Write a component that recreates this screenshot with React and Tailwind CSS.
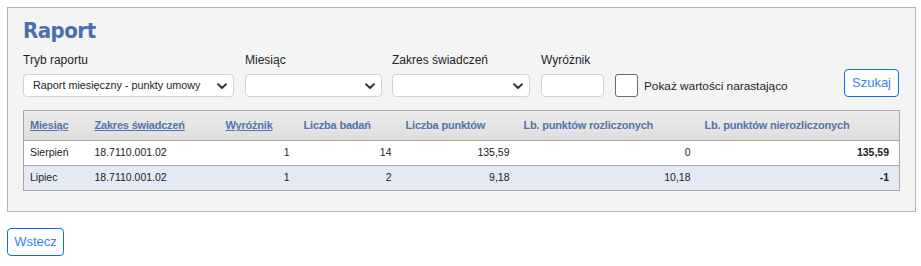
import React from "react";

const Chevron = () => (
  <svg width="10" height="7" viewBox="0 0 10 7" className="absolute right-[6px] top-[8px]">
    <path d="M1 1.2 L5 5 L9 1.2" fill="none" stroke="#343a40" strokeWidth="2" strokeLinecap="round" strokeLinejoin="round" />
  </svg>
);

const Select = ({ w, text }) => (
  <div className={`relative h-[23px] ${w} bg-white border border-[#ced4da] rounded-[4px] flex items-center pl-[9px] text-[10.8px] text-[#212529]`}>
    <span>{text}</span>
    <Chevron />
  </div>
);

const rows = [
  { m: "Sierpień", z: "18.7110.001.02", w: "1", lb: "14", lp: "135,59", roz: "0", nroz: "135,59", bg: "bg-white" },
  { m: "Lipiec", z: "18.7110.001.02", w: "1", lb: "2", lp: "9,18", roz: "10,18", nroz: "-1", bg: "bg-[#e3eaf6]" },
];

export default function App() {
  return (
    <div className="bg-white w-[921px] h-[266px] pt-[7px] pl-[7px]" style={{ fontFamily: '"Liberation Sans", Arial, sans-serif' }}>
      <div className="w-[909px] h-[205px] border border-[#b4b4b4] bg-[#f4f4f4] pl-[15px] pr-[16px] pt-[9px]">
        <h1 className="font-bold text-[#4a6fae] leading-[28px] tracking-[-0.5px] text-[22px]" style={{ fontFamily: '"DejaVu Sans Condensed", "DejaVu Sans", sans-serif' }}>Raport</h1>
        <div className="flex items-end justify-between mt-[7px]">
          <div className="flex items-end">
            <div className="flex flex-col">
              <span className="text-[12px] text-[#212529] leading-[16px] mb-[6px]">Tryb raportu</span>
              <Select w="w-[211px]" text="Raport miesięczny - punkty umowy" />
            </div>
            <div className="flex flex-col ml-[11px]">
              <span className="text-[12px] text-[#212529] leading-[16px] mb-[6px]">Miesiąc</span>
              <Select w="w-[137px]" text="" />
            </div>
            <div className="flex flex-col ml-[10px]">
              <span className="text-[12px] text-[#212529] leading-[16px] mb-[6px]">Zakres świadczeń</span>
              <Select w="w-[138px]" text="" />
            </div>
            <div className="flex flex-col ml-[11px]">
              <span className="text-[12px] text-[#212529] leading-[16px] mb-[6px]">Wyróżnik</span>
              <div className="h-[23px] w-[63px] bg-white border border-[#ced4da] rounded-[4px]" />
            </div>
            <div className="flex items-center ml-[11px] h-[23px]">
              <div className="w-[23px] h-[23px] bg-white border border-[#6c6c6c] rounded-[3px]" />
              <span className="ml-[6px] text-[11.8px] text-[#212529] mt-[2px]">Pokaż wartości narastająco</span>
            </div>
          </div>
          <button className="h-[28px] w-[55px] border border-[#0d6efd] rounded-[4px] bg-white text-[#3d7cf7] text-[13px]">Szukaj</button>
        </div>
        <table className="mt-[13px] w-[876px] table-fixed border-collapse border border-[#a9a9a9] text-[10.5px]">
          <colgroup>
            <col className="w-[65px]" />
            <col className="w-[131px]" />
            <col className="w-[78px]" />
            <col className="w-[102px]" />
            <col className="w-[118px]" />
            <col className="w-[181px]" />
            <col className="w-[201px]" />
          </colgroup>
          <thead>
            <tr className="h-[30px] bg-gradient-to-b from-[#ececec] to-[#dedede] border-b border-[#a9a9a9] text-[#5274ab] text-[11px] tracking-[-0.2px]">
              <th className="text-left font-bold pl-[6px]"><span className="underline">Miesiąc</span></th>
              <th className="text-left font-bold pl-[6px]"><span className="underline">Zakres świadczeń</span></th>
              <th className="text-left font-bold pl-[6px]"><span className="underline">Wyróżnik</span></th>
              <th className="text-left font-bold pl-[6px]">Liczba badań</th>
              <th className="text-left font-bold pl-[6px]">Liczba punktów</th>
              <th className="text-left font-bold pl-[6px]">Lb. punktów rozliczonych</th>
              <th className="text-left font-bold pl-[6px]">Lb. punktów nierozliczonych</th>
            </tr>
          </thead>
          <tbody className="text-[#222]">
            {rows.map((r, i) => (
              <tr key={i} className={`h-[25px] ${r.bg} border-b border-[#a9a9a9]`}>
                <td className="pl-[6px]">{r.m}</td>
                <td className="pl-[6px]">{r.z}</td>
                <td className="text-right pr-[8px]">{r.w}</td>
                <td className="text-right pr-[8px]">{r.lb}</td>
                <td className="text-right pr-[8px]">{r.lp}</td>
                <td className="text-right pr-[8px]">{r.roz}</td>
                <td className="text-right pr-[10px] font-bold">{r.nroz}</td>
              </tr>
            ))}
          </tbody>
        </table>
      </div>
      <button className="mt-[16px] h-[28px] w-[57px] border border-[#0d6efd] rounded-[4px] bg-white text-[#3d7cf7] text-[13px]">Wstecz</button>
    </div>
  );
}
